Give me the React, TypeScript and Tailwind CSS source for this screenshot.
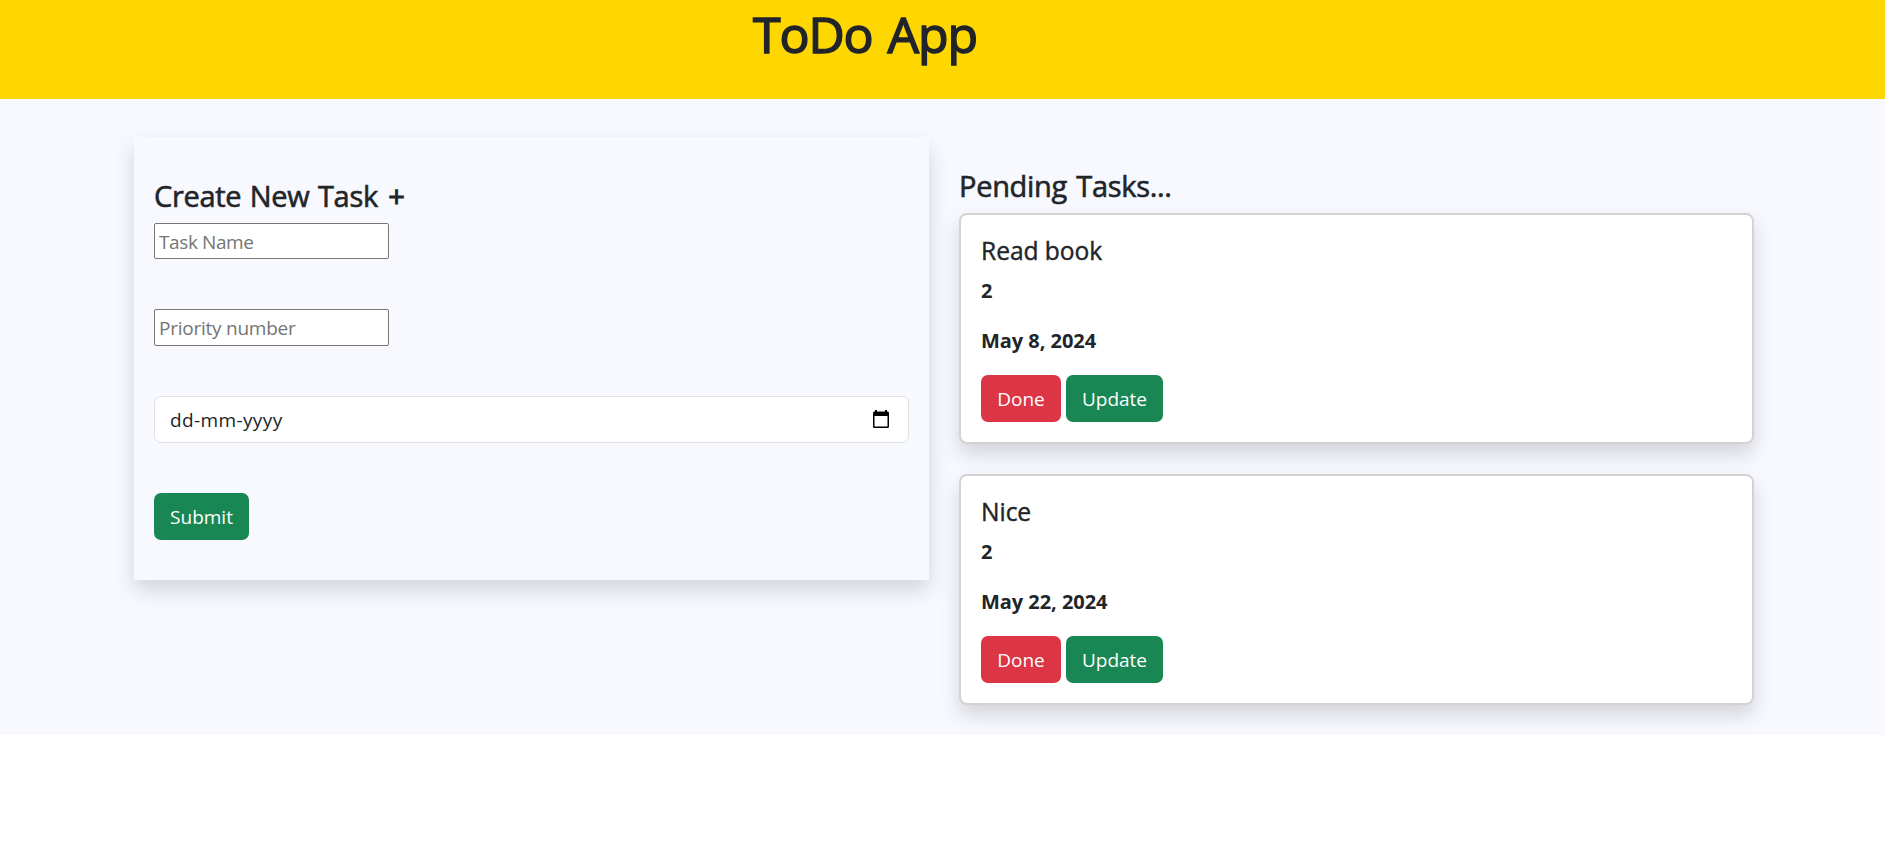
import { useState } from 'react';

interface Task {
  name: string;
  priority: number;
  date: string;
}

const tasks: Task[] = [
  { name: 'Read book', priority: 2, date: 'May 8, 2024' },
  { name: 'Nice', priority: 2, date: 'May 22, 2024' },
];

const panelShadow = 'shadow-[0_10px_20px_rgba(0,0,0,0.15)]';
const button = 'h-[47px] rounded-[7px] pt-px text-white';

function CalendarIcon() {
  return (
    <svg width="16" height="18" viewBox="0 0 16 18" className="mb-0.5 shrink-0">
      <path
        d="M2 0h2v1.5h8V0h2v1.5h.5Q16 1.5 16 3v13.5q0 1.5-1.5 1.5h-13Q0 18 0 16.500V3Q0 1.500 1.500 1.500H2zM1.500 6v10.500h13V6z"
        fill="#000"
        fillRule="evenodd"
      />
    </svg>
  );
}

function TaskForm() {
  const [name, setName] = useState('');
  const [priority, setPriority] = useState('');
  const field =
    'block w-[235px] rounded-[2px] border border-[#767676] bg-white pl-1 pr-1 pt-px outline-none placeholder:text-[#757575] placeholder:opacity-100';
  return (
    <form
      onSubmit={(e) => e.preventDefault()}
      className={`h-[443px] w-[795px] bg-[#f8f8ff] px-5 pt-[41px] ${panelShadow}`}
    >
      <h4 className="mb-[9px] h-9 text-[29px] font-medium leading-9 tracking-[-0.3px] [word-spacing:1.2px] [-webkit-text-stroke:0.6px]">
        Create New Task <span className="ml-[2px] [-webkit-text-stroke:1px]">+</span>
      </h4>
      <input
        value={name}
        onChange={(e) => setName(e.target.value)}
        placeholder="Task Name"
        className={`${field} h-9 tracking-[-0.4px]`}
      />
      <input
        value={priority}
        onChange={(e) => setPriority(e.target.value)}
        placeholder="Priority number"
        className={`${field} mt-[50px] h-[37px] tracking-[-0.24px]`}
      />
      <div className="mt-[50px] flex h-[47px] items-center justify-between rounded-[7px] border border-[#dee2e6] bg-white pl-[15px] pr-[19px]">
        <span className="pt-px tracking-[0.38px]">dd-mm-yyyy</span>
        <CalendarIcon />
      </div>
      <button type="submit" className={`${button} mt-[50px] w-[95px] bg-[#198754]`}>
        Submit
      </button>
    </form>
  );
}

function TaskCard({ task }: { task: Task }) {
  return (
    <article
      className={`mb-[30px] h-[231px] rounded-[8px] border-2 border-[#d3d3d3] bg-white px-5 pt-[21px] ${panelShadow}`}
    >
      <h5 className="mb-[10px] h-[30px] text-[24.6px] font-medium leading-[30px] tracking-[-0.05px] [-webkit-text-stroke:0.4px]">
        {task.name}
      </h5>
      <p className="h-[30px] text-[20px] font-bold leading-[30px] tracking-[-0.05px]">{task.priority}</p>
      <p className="mt-5 h-[30px] text-[20px] font-bold leading-[30px] tracking-[-0.05px]">{task.date}</p>
      <div className="mt-[19px] flex gap-[5px]">
        <button className={`${button} w-20 bg-[#dc3545]`}>Done</button>
        <button className={`${button} w-[97px] bg-[#198754]`}>Update</button>
      </div>
    </article>
  );
}

export default function App() {
  return (
    <div className="min-h-[856px] bg-white font-['Open_Sans','Noto_Sans',sans-serif] text-[19px] text-[#212529]">
      <header className="h-[99px] bg-[#ffd700] pl-[753px] pt-1">
        <h1 className="text-[50px] font-medium leading-[60px] tracking-[-1.1px] [word-spacing:3px] [-webkit-text-stroke:1.5px]">
          ToDo App
        </h1>
      </header>
      <main className="flex h-[636px] items-start gap-[30px] overflow-hidden bg-[#f8f8ff] pl-[134px] pt-[38px]">
        <TaskForm />
        <section className="w-[795px] pt-[31px]">
          <h4 className="mb-[9px] h-9 text-[29px] font-medium leading-9 tracking-[-0.3px] [word-spacing:2px] [-webkit-text-stroke:0.6px]">
            Pending Tasks...
          </h4>
          {tasks.map((task) => (
            <TaskCard key={task.name} task={task} />
          ))}
        </section>
      </main>
    </div>
  );
}
